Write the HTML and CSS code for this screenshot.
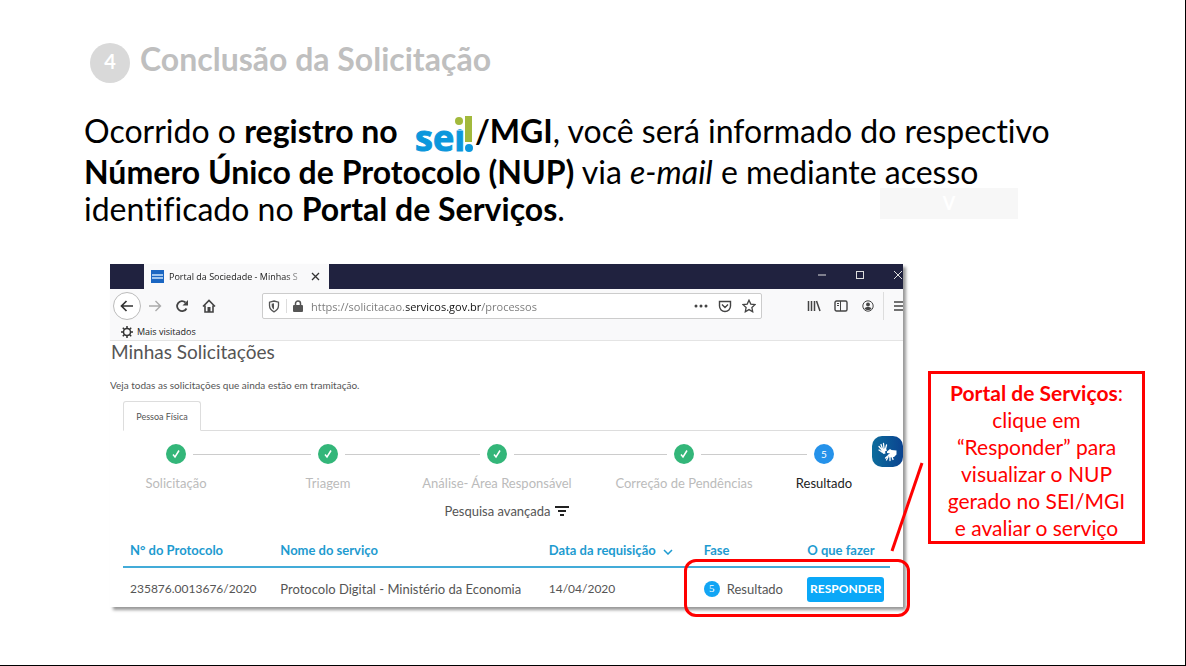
FILE: index.html
```html
<!DOCTYPE html>
<html lang="pt-BR">
<head>
<meta charset="utf-8">
<meta name="viewport" content="width=device-width, initial-scale=1">
<title>Conclusão da Solicitação</title>
<link rel="stylesheet" href="styles.css">
</head>
<body>
<main class="slide">
  <header class="slide-header">
    <span class="step-number">4</span>
    <h1 class="slide-title">Conclusão da Solicitação</h1>
  </header>

  <div class="intro">
    <div class="ghost-box">V</div>
    <p class="intro-text">
      <span class="line line-first">Ocorrido o <b>registro no</b>
        <svg class="sei-logo" viewBox="0 0 60 40" role="img" aria-label="sei!">
          <text class="sei-text" x="0" y="36">sei</text>
          <rect x="38" y="0" width="12" height="14" fill="#fff"/>
          <circle cx="44" cy="6" r="4" fill="#a2b93c"/>
          <rect x="50" y="1" width="7" height="26" fill="#a2b93c"/>
          <circle cx="54" cy="33" r="4" fill="#0b97dc"/>
        </svg><b>/MGI</b>, você será informado do respectivo</span>
      <span class="line"><b>Número Único de Protocolo (NUP)</b> via <i>e-mail</i> e mediante acesso</span>
      <span class="line">identificado no <b>Portal de Serviços</b>.</span>
    </p>
  </div>

  <div class="stage">
    <div class="shot">
      <section class="browser">
        <div class="titlebar">
          <div class="browser-tab">
            <span class="favicon"><i></i><i></i></span>
            <span class="tab-label">Portal da Sociedade - Minhas S</span>
            <button class="icon-btn tab-close" aria-label="Fechar aba"><svg width="9" height="9" viewBox="0 0 9 9"><path d="M1 1l7 7M8 1l-7 7" stroke="#333" stroke-width="1.3"/></svg></button>
          </div>
          <div class="window-controls">
            <button class="icon-btn" aria-label="Minimizar"><svg width="10" height="10" viewBox="0 0 10 10"><path d="M1 5h8" stroke="#ddd"/></svg></button>
            <button class="icon-btn" aria-label="Maximizar"><svg width="10" height="10" viewBox="0 0 10 10"><rect x="1.5" y="1.5" width="7" height="7" fill="none" stroke="#ddd"/></svg></button>
            <button class="icon-btn" aria-label="Fechar"><svg width="10" height="10" viewBox="0 0 10 10"><path d="M1 1l8 8M9 1l-8 8" stroke="#ddd"/></svg></button>
          </div>
        </div>

        <div class="navbar">
          <button class="icon-btn back" aria-label="Voltar"><svg width="14" height="12" viewBox="0 0 14 12"><path d="M13 6H2M6.500 1L1.500 6l5 5" fill="none" stroke="#333" stroke-width="1.7"/></svg></button>
          <button class="icon-btn" aria-label="Avançar"><svg width="14" height="12" viewBox="0 0 14 12"><path d="M1 6h11M7.500 1l5 5-5 5" fill="none" stroke="#aaa" stroke-width="1.4"/></svg></button>
          <button class="icon-btn" aria-label="Recarregar"><svg width="14" height="14" viewBox="0 0 14 14"><path d="M11.500 9.500A5 5 0 1 1 10.500 3.500" fill="none" stroke="#444" stroke-width="1.8"/><path d="M13 1v5.500H7.500z" fill="#444"/></svg></button>
          <button class="icon-btn" aria-label="Início"><svg width="14" height="14" viewBox="0 0 14 14"><path d="M1 7.500L7 1.500l6 6M3 6.500V13h8V6.500" fill="none" stroke="#444" stroke-width="1.6"/><path d="M5.500 13V8h3v5z" fill="#444"/></svg></button>
          <div class="urlbar">
            <svg width="12" height="13" viewBox="0 0 12 13"><path d="M6 1l4.500 1.200v3.300c0 3-1.800 5-4.500 6.300C3.300 10.500 1.500 8.500 1.500 5.500V2.200z" fill="none" stroke="#555" stroke-width="1.3"/><path d="M6 3.200V9.500C4.500 8.500 3.700 7.200 3.700 5.500V3.800z" fill="#555"/></svg>
            <span class="divider"></span>
            <svg width="10" height="12" viewBox="0 0 10 12"><rect y="5" width="10" height="7" rx="1" fill="#555"/><path d="M2.500 6V3.500a2.500 2.500 0 0 1 5 0V6" fill="none" stroke="#555" stroke-width="1.5"/></svg>
            <input class="url-input" type="text" aria-label="Endereço" value="https://solicitacao.servicos.gov.br/processos">
            <button class="icon-btn" aria-label="Mais ações"><svg width="14" height="4" viewBox="0 0 14 4"><circle cx="2" cy="2" r="1.500" fill="#444"/><circle cx="7" cy="2" r="1.500" fill="#444"/><circle cx="12" cy="2" r="1.500" fill="#444"/></svg></button>
            <button class="icon-btn" aria-label="Salvar no Pocket"><svg width="14" height="13" viewBox="0 0 14 13"><path d="M1.500 1.500h11V6a5.500 5.500 0 0 1-11 0zM4 4.500l3 3 3-3" fill="none" stroke="#444" stroke-width="1.4"/></svg></button>
            <button class="icon-btn" aria-label="Favoritar"><svg width="14" height="14" viewBox="0 0 14 14"><path d="M7 1.200l1.800 3.900 4.200.5-3.100 2.900.8 4.200L7 10.600l-3.700 2.100.8-4.200L1 5.600l4.200-.5z" fill="none" stroke="#444" stroke-width="1.300"/></svg></button>
          </div>
          <button class="icon-btn" aria-label="Biblioteca"><svg width="14" height="12" viewBox="0 0 14 12"><path d="M1.500 1v10M4.500 1v10M7.500 1v10M9.500 1l3.500 10" stroke="#444" stroke-width="1.500"/></svg></button>
          <button class="icon-btn" aria-label="Barra lateral"><svg width="14" height="12" viewBox="0 0 14 12"><rect x="1" y="1" width="12" height="10" rx="1.500" fill="none" stroke="#444" stroke-width="1.400"/><path d="M6.500 1v10M3 3.500h2M3 5.500h2" stroke="#444"/></svg></button>
          <button class="icon-btn" aria-label="Conta"><svg width="12" height="12" viewBox="0 0 12 12"><circle cx="6" cy="6" r="5.200" fill="none" stroke="#444"/><circle cx="6" cy="4.500" r="1.900" fill="#444"/><path d="M2.500 8.500c1-2 6-2 7 0-1.500 2-5.500 2-7 0z" fill="#444"/></svg></button>
          <span class="divider tall"></span>
          <button class="icon-btn menu" aria-label="Menu"><svg width="12" height="10" viewBox="0 0 12 10"><path d="M0 1h12M0 5h12M0 9h12" stroke="#444" stroke-width="1.300"/></svg></button>
        </div>

        <div class="bookmarks">
          <svg width="12" height="12" viewBox="0 0 12 12"><circle cx="6" cy="6" r="3.500" fill="none" stroke="#333" stroke-width="1.500"/><path d="M6 0v2.500M6 9.500V12M0 6h2.500M9.500 6H12M1.800 1.800l1.700 1.700M8.500 8.500l1.700 1.700M1.800 10.200l1.700-1.700M8.500 3.500l1.700-1.700" stroke="#333" stroke-width="1.500"/></svg>
          <span>Mais visitados</span>
        </div>

        <div class="page">
          <h2 class="page-title">Minhas Solicitações</h2>
          <p class="page-lead">Veja todas as solicitações que ainda estão em tramitação.</p>
          <div class="tabs"><button class="page-tab">Pessoa Física</button></div>

          <div class="steps">
            <div class="step"><span class="dot"><svg width="10" height="10" viewBox="0 0 10 10"><path d="M2 5.500L4 8l4-6.500" fill="none" stroke="#fff" stroke-width="1.500"/></svg></span><span class="step-label">Solicitação</span></div>
            <span class="link link-1"></span>
            <div class="step"><span class="dot"><svg width="10" height="10" viewBox="0 0 10 10"><path d="M2 5.500L4 8l4-6.500" fill="none" stroke="#fff" stroke-width="1.500"/></svg></span><span class="step-label">Triagem</span></div>
            <span class="link link-2"></span>
            <div class="step"><span class="dot"><svg width="10" height="10" viewBox="0 0 10 10"><path d="M2 5.500L4 8l4-6.500" fill="none" stroke="#fff" stroke-width="1.500"/></svg></span><span class="step-label">Análise- Área Responsável</span></div>
            <span class="link link-3"></span>
            <div class="step"><span class="dot"><svg width="10" height="10" viewBox="0 0 10 10"><path d="M2 5.500L4 8l4-6.500" fill="none" stroke="#fff" stroke-width="1.500"/></svg></span><span class="step-label">Correção de Pendências</span></div>
            <span class="link link-4"></span>
            <div class="step current"><span class="dot">5</span><span class="step-label">Resultado</span></div>
          </div>

          <button class="search">Pesquisa avançada <svg width="14" height="10" viewBox="0 0 14 10"><path d="M0 1h14M3 5h8M5 9h4" stroke="#222" stroke-width="1.800"/></svg></button>

          <table class="requests">
            <thead>
              <tr>
                <th class="col-number">N° do Protocolo</th>
                <th class="col-name">Nome do serviço</th>
                <th class="col-date">Data da requisição <svg class="sort" width="10" height="6" viewBox="0 0 10 6"><path d="M1 1l4 4 4-4" fill="none" stroke="#1e9bd0" stroke-width="1.500"/></svg></th>
                <th class="col-phase">Fase</th>
                <th class="col-action">O que fazer</th>
              </tr>
            </thead>
            <tbody>
              <tr>
                <td class="number">235876.0013676/2020</td>
                <td>Protocolo Digital - Ministério da Economia</td>
                <td class="number">14/04/2020</td>
                <td><span class="phase"><span class="phase-dot">5</span>Resultado</span></td>
                <td><button class="reply">RESPONDER</button></td>
              </tr>
            </tbody>
          </table>
        </div>

        <button class="vlibras" aria-label="Libras">
          <svg width="22" height="22" viewBox="0 0 22 22"><g fill="none" stroke="#fff" stroke-width="1.300" stroke-linecap="round"><path d="M5 9L2 5.500M5.500 8L4 3.500M7 7.500L6.500 2.500M8.500 8L9.500 4M5 11L2 9"/><path d="M11 16l-1.500 3M13 16v3.500M15 15.500l1 3M12 14l-3.500 3"/></g><path d="M4.500 8.500L8.500 7l1.500 2.500-2 1 .5 2L6.500 13 4.500 11z" fill="#fff"/><path d="M10 10.500l3-2.500 1.500 1 5 .5v4L17 16l-5 .5-1-2.500 2-1.500-3-.5z" fill="#fff"/></svg>
        </button>
      </section>
      <div class="highlight"></div>
      <svg class="pointer" width="34" height="92" viewBox="0 0 34 92"><path d="M32 2L2 90" stroke="#f00" stroke-width="3"/></svg>
    </div>

    <aside class="callout"><b>Portal de Serviços</b>:<br>clique em<br>“Responder” para<br>visualizar o NUP<br>gerado no SEI/MGI<br>e avaliar o serviço</aside>
  </div>
</main>
</body>
</html>
```
FILE: styles.css
```css
* { box-sizing: border-box; }

body {
  margin: 0;
  background: #fff;
  color: #000;
  font-family: Lato, "Open Sans", sans-serif;
  font-variant-ligatures: none;
}

button {
  margin: 0;
  padding: 0;
  border: 0;
  background: none;
  color: inherit;
  font: inherit;
}

svg { flex: none; }

.slide {
  min-height: 100vh;
  padding: 40px 40px 0 84px;
  border-right: 1px solid #000;
  border-bottom: 1px solid #000;
}

.slide-header {
  display: flex;
  align-items: flex-start;
  gap: 10px;
  padding-left: 6px;
}

.step-number {
  width: 40px;
  height: 40px;
  margin-top: 3px;
  border-radius: 50%;
  background: #d9d9d9;
  color: #fff;
  font-size: 20px;
  font-weight: 700;
  line-height: 36px;
  text-align: center;
}

.slide-title {
  margin: 0;
  color: #bfbfbf;
  font-size: 32px;
  line-height: 38px;
}

.intro { position: relative; margin-top: 27px; }

.intro-text {
  position: relative;
  margin: 0;
  font-size: 32px;
  line-height: 37px;
}

.line { display: block; white-space: nowrap; }
.line-first { height: 43px; line-height: 41px; }

.sei-logo {
  overflow: visible;
  width: 60px;
  height: 40px;
  margin-left: 9px;
  vertical-align: -12px;
}

.sei-text {
  fill: #0b97dc;
  stroke: #0b97dc;
  stroke-width: 1px;
  font-family: "Open Sans", sans-serif;
  font-size: 36px;
  font-weight: 700;
}

.ghost-box {
  position: absolute;
  top: 78px;
  right: 127px;
  width: 138px;
  height: 31px;
  background: #f7f7f7;
  color: #fff;
  font-size: 18px;
  font-weight: 700;
  line-height: 30px;
  text-align: center;
}

.stage {
  display: grid;
  grid-template-columns: minmax(0, 793fr) minmax(0, 217fr);
  column-gap: 25px;
  align-items: start;
  margin-top: 37px;
  padding-left: 26px;
}

.shot { position: relative; }

.browser {
  position: relative;
  overflow: hidden;
  background: #fff;
  box-shadow: 3px 3px 3px #999;
}

.icon-btn {
  display: flex;
  flex: none;
  align-items: center;
  justify-content: center;
  width: 27px;
  height: 27px;
}

.titlebar {
  display: flex;
  justify-content: space-between;
  height: 25px;
  padding-left: 34px;
  background: #20223f;
}

.browser-tab {
  display: flex;
  align-items: center;
  gap: 5px;
  width: 185px;
  padding-left: 7px;
  background: #f9f9fa;
  color: #222;
  font-family: "Open Sans", sans-serif;
  font-size: 9px;
  white-space: nowrap;
}

.favicon {
  display: flex;
  flex: none;
  flex-direction: column;
  justify-content: center;
  gap: 1px;
  width: 13px;
  height: 13px;
  padding: 1px;
  background: #1a66c2;
}

.favicon i { height: 2px; background: #9fc5ee; }

.tab-label {
  overflow: hidden;
  width: 137px;
  -webkit-mask-image: linear-gradient(90deg, #000 85%, transparent);
  mask-image: linear-gradient(90deg, #000 85%, transparent);
}

.tab-close { width: 9px; height: 25px; }

.window-controls {
  display: flex;
  gap: 11px;
  margin-right: -8px;
}

.window-controls .icon-btn { height: 22px; }

.navbar {
  display: flex;
  align-items: center;
  height: 34px;
  padding-left: 3px;
  background: #f9f9fa;
}

.back {
  width: 28px;
  height: 28px;
  border: 1px solid #bbb;
  border-radius: 50%;
  background: #fff;
}

.urlbar {
  display: flex;
  flex: 1;
  align-items: center;
  gap: 6px;
  min-width: 0;
  height: 26px;
  margin: 0 38px 0 40px;
  padding: 0 3px 0 5px;
  border: 1px solid #ccc;
  border-radius: 2px;
  background: #fff;
}

.urlbar .icon-btn { width: 18px; }

.divider { width: 1px; height: 14px; background: #ddd; }
.divider.tall { height: 28px; margin: 0 2px; }

.url-input {
  flex: 1;
  min-width: 0;
  padding: 0 0 0 2px;
  border: 0;
  outline: 0;
  background: linear-gradient(90deg, #777 97px, #111 97px, #111 172px, #777 172px);
  -webkit-background-clip: text;
  background-clip: text;
  color: transparent;
  font-family: "Open Sans", sans-serif;
  font-size: 11px;
}

.menu { margin-right: -10px; }

.bookmarks {
  display: flex;
  align-items: center;
  gap: 4px;
  height: 18px;
  padding-left: 11px;
  border-bottom: 1px solid #e4e4e4;
  background: #f9f9fa;
  color: #222;
  font-family: "Open Sans", sans-serif;
  font-size: 9px;
}

.page { padding: 0 13px 2px; color: #555; }

.page-title {
  margin: 0 -12px;
  font-size: 19px;
  font-weight: 400;
  line-height: 22px;
}

.page-lead {
  margin: 15px -13px 9px;
  font-size: 10px;
  line-height: 14px;
}

.tabs { height: 30px; border-bottom: 1px solid #ddd; }

.page-tab {
  width: 78px;
  height: 30px;
  border: 1px solid #ddd;
  border-bottom-color: #fff;
  border-radius: 3px 3px 0 0;
  background: #fff;
  font-size: 9px;
}

.steps {
  display: flex;
  align-items: flex-start;
  margin-top: 13px;
  padding: 0 56px 0 43px;
}

.step {
  display: flex;
  flex: none;
  flex-direction: column;
  align-items: center;
  gap: 11px;
  width: 20px;
}

.dot {
  display: flex;
  align-items: center;
  justify-content: center;
  width: 20px;
  height: 20px;
  border-radius: 50%;
  background: #33b679;
  color: #fff;
  font-size: 10px;
}

.step-label {
  color: #bbb;
  font-size: 13px;
  line-height: 16px;
  white-space: nowrap;
}

.current .dot { background: #2592ea; }
.current .step-label { color: #222; }

.link { height: 1px; margin: 10px 7px 0; background: #ccc; }
.link-1 { flex: 118; }
.link-2 { flex: 135; }
.link-3 { flex: 153; }
.link-4 { flex: 106; }

.search {
  display: flex;
  align-items: center;
  gap: 4px;
  margin: 12px auto 0;
  font-size: 13px;
  line-height: 16px;
}

.requests {
  width: 100%;
  margin-top: 23px;
  border-collapse: collapse;
  table-layout: fixed;
  font-size: 13px;
  line-height: 16px;
  white-space: nowrap;
}

.requests th {
  padding: 0 0 8px 7px;
  border-bottom: 2px solid #43abd8;
  color: #1e9bd0;
  text-align: left;
}

.requests td { height: 38px; padding: 5px 0 0 7px; }
.requests .number { font-size: 12px; }

.col-number { width: 19.6%; }
.col-name { width: 35%; }
.col-date { width: 20.2%; }
.col-phase { width: 13.5%; }

.sort { margin-left: 4px; }

.phase { display: flex; align-items: center; gap: 7px; }

.phase-dot {
  width: 16px;
  height: 16px;
  border-radius: 50%;
  background: #12a5f4;
  color: #fff;
  font-family: "Liberation Serif", serif;
  font-size: 11px;
  line-height: 14px;
  text-align: center;
}

.reply {
  width: 77px;
  height: 25px;
  border-radius: 3px;
  background: #0aa8f8;
  color: #fff;
  font-size: 12px;
  font-weight: 700;
}

.vlibras {
  position: absolute;
  top: 172px;
  right: 0;
  display: flex;
  align-items: center;
  justify-content: center;
  width: 31px;
  height: 31px;
  border-radius: 10px;
  background: linear-gradient(90deg, #0c6c9c, #0b4390);
}

.highlight {
  position: absolute;
  right: -7px;
  bottom: -10px;
  width: 226px;
  height: 58px;
  border: 3px solid #f00;
  border-radius: 12px;
}

.pointer { position: absolute; top: 197px; right: -21px; }

.callout {
  margin-top: 107px;
  padding: 5px 4px 0;
  border: 3px solid #f00;
  color: #f00;
  font-size: 21px;
  line-height: 27px;
  text-align: center;
  white-space: nowrap;
}
```
